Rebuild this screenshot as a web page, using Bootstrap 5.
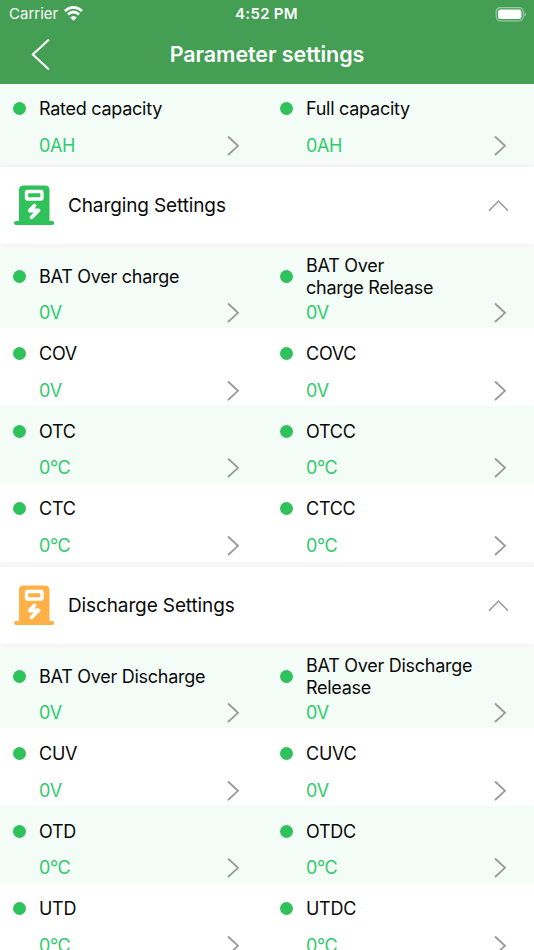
<!DOCTYPE html>
<html lang="en">
<head>
<meta charset="utf-8">
<meta name="viewport" content="width=device-width, initial-scale=1">
<title>Parameter settings</title>
<link href="https://cdn.jsdelivr.net/npm/bootstrap@5.3.0/dist/css/bootstrap.min.css" rel="stylesheet">
<style>
body{font-family:Inter,"Liberation Sans",sans-serif;font-size:18px;line-height:21.5px;color:#0a0a0a;height:950px;overflow:hidden;background:#fff}
.app-head{background:#449e54;height:84px;color:#fff;z-index:2}
.status{height:28px;font-size:15px;padding:0 8px 0 9px}
.wifi{margin-left:6px;margin-top:-2px}
.clock{font-weight:600;font-size:15px;letter-spacing:.3px;margin-left:-2px}
.title-bar{height:54px;margin-top:-1px}
.title-bar h1{font-size:21.5px;font-weight:600;letter-spacing:-.07px;line-height:26px}
.back{width:84px;padding-left:30px}
.first{margin-top:-1px}
.params{height:77.5px}
.tint{background:#f4fcf8}
.param{padding:7px 27px 0 13px}
.dot{width:13px;height:13px;background:#2fc25b;border-radius:50%;margin-right:13px;flex:none}
.label-line{height:37.5px}
.label-text{padding-top:.5px;letter-spacing:-.27px}
.value-line{height:22px;margin-top:7px;padding-left:26px;color:#2fcb6b}
.value-text{letter-spacing:-.4px}
.section-gap{height:90px;background:#fafafa;padding:6.5px 0}
.section-bar{height:77px;background:#fff;padding:0 25px 0 14px;box-shadow:0 0 7px rgba(0,0,0,.06)}
.section-bar h2{font-size:19px;font-weight:400;line-height:24px;margin-left:14px;padding-top:1px;letter-spacing:-.12px}
.station{margin-top:-1px}
.green{color:#2fc25b}.orange{color:#ffb148}
svg{display:block;flex:none}
</style>
<script src="https://cdn.jsdelivr.net/npm/bootstrap@5.3.0/dist/js/bootstrap.bundle.min.js"></script>
</head>
<body>
<svg class="d-none">
<symbol id="next" viewBox="0 0 14 22"><path d="M2 1.500 12 10.800 2 20" fill="none" stroke="#999" stroke-width="1.800"/></symbol>
<symbol id="up" viewBox="0 0 21 13"><path d="M1 11.800 10.500 2 20 11.800" fill="none" stroke="#999" stroke-width="1.500"/></symbol>
<symbol id="station" viewBox="0 0 40 40"><path d="M5 36V5Q5 .5 9.500 .5H31Q35.500 .5 35.500 5V36H38.200a2 2 0 0 1 0 4H2a2 2 0 0 1 0-4Z" fill="currentColor"/><rect x="12.500" y="6.500" width="15.500" height="7.500" rx="1.200" fill="none" stroke="#fff" stroke-width="3.400"/><path d="M20.500 20.500 15.700 25.500H24.500L17.500 32.300" fill="none" stroke="#fff" stroke-width="3.800" stroke-linecap="round" stroke-linejoin="round"/></symbol>
</svg>
<header class="app-head position-relative">
<div class="status d-flex align-items-center">
<div class="col d-flex align-items-center"><span>Carrier</span>
<svg class="wifi" width="19" height="15" viewBox="0 0 19 15" fill="none" stroke="#fff" stroke-width="2.700"><path d="M.9 5.100Q9.500-2.500 18.100 5.100M3.900 8.500Q9.500 3.500 15.100 8.500"/><path d="M6.200 11.400Q9.500 8.400 12.800 11.400L9.500 14.800Z" fill="#fff" stroke="none"/></svg></div>
<div class="clock">4:52 PM</div>
<div class="col d-flex justify-content-end"><svg width="31" height="15" viewBox="0 0 31 15"><rect x="1.200" y=".6" width="27" height="13.200" rx="4" fill="none" stroke="#9bcba4" stroke-width="1.200"/><rect x="3" y="2.400" width="23.400" height="9.600" rx="2.300" fill="#fff"/><path d="M29.500 4.900Q31 5.700 31 7.200T29.500 9.500Z" fill="#9bcba4"/></svg></div>
</div>
<div class="title-bar d-flex align-items-center">
<div class="back"><svg width="20" height="32" viewBox="0 0 20 32"><path d="M18.200 2.200 2.800 16.500 18.200 30.800" fill="none" stroke="#fff" stroke-width="2.200" stroke-linecap="round" stroke-linejoin="round"/></svg></div>
<h1 class="flex-grow-1 text-center m-0">Parameter settings</h1><div class="back"></div>
</div>
</header>
<main id="settings"></main>
<script>
const sections = [
  {rows: [[['Rated capacity', '0AH'], ['Full capacity', '0AH']]]},
  {title: 'Charging Settings', tone: 'green', rows: [
    [['BAT Over charge', '0V'], ['BAT Over<br>charge Release', '0V']],
    [['COV', '0V'], ['COVC', '0V']],
    [['OTC', '0°C'], ['OTCC', '0°C']],
    [['CTC', '0°C'], ['CTCC', '0°C']]]},
  {title: 'Discharge Settings', tone: 'orange', rows: [
    [['BAT Over Discharge', '0V'], ['BAT Over Discharge<br>Release', '0V']],
    [['CUV', '0V'], ['CUVC', '0V']],
    [['OTD', '0°C'], ['OTDC', '0°C']],
    [['UTD', '0°C'], ['UTDC', '0°C']]]}
];
const param = ([label, value]) => `<div class="col-6 param">
  <div class="label-line d-flex align-items-center"><span class="dot"></span><span class="label-text text-nowrap">${label}</span></div>
  <div class="value-line d-flex align-items-center justify-content-between"><span class="value-text">${value}</span><svg width="14" height="22"><use href="#next"/></svg></div></div>`;
document.getElementById('settings').innerHTML = sections.map(s =>
  (s.title ? `<div class="section-gap"><div class="section-bar d-flex align-items-center"><svg class="station ${s.tone}" width="40" height="40"><use href="#station"/></svg><h2 class="mb-0 flex-grow-1">${s.title}</h2><svg width="21" height="13"><use href="#up"/></svg></div></div>` : '') +
  s.rows.map((r, i) => `<div class="params row g-0 ${i % 2 ? '' : 'tint'} ${s.title ? '' : 'first'}">${r.map(param).join('')}</div>`).join('')
).join('');
</script>
</body>
</html>
